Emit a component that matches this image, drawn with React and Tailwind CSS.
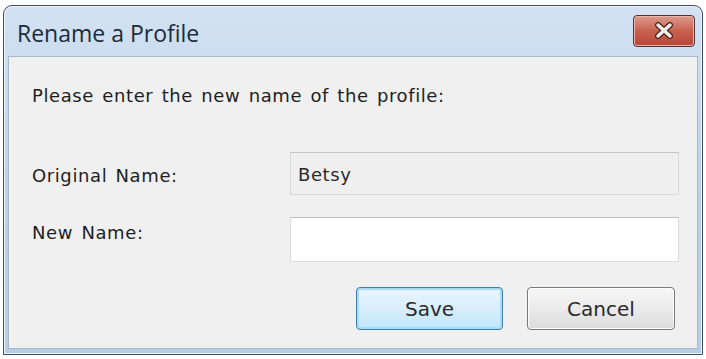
export default function App() {
  return (
    <div className="w-[706px] h-[359px] bg-white p-[3px] pt-[5px] pb-[4px]">
      <div
        className="h-full flex flex-col rounded-t-[9px] border border-[#3f4f5f] bg-gradient-to-b from-[#d3e2f2] via-[#bcd2ea] to-[#b6cde7] shadow-[inset_0_0_0_1px_#eef4fb]"
        style={{ fontFamily: '"DejaVu Sans", Tahoma, sans-serif' }}
      >
        {/* Title bar */}
        <div className="h-[50px] flex items-center justify-between pl-[13px] pr-[7px]">
          <span
            className="text-[23px] text-[#1a2c3c] pt-[5px]"
            style={{ fontFamily: '"Open Sans", "Noto Sans", sans-serif' }}
          >
            Rename a Profile
          </span>
          <div className="w-[62px] h-[32px] mb-[1px] rounded-[4px] border border-[#4e3436] bg-gradient-to-b from-[#dc9a8e] via-[#c9604f] to-[#b94634] shadow-[inset_0_0_0_1px_#eab7aa] flex items-center justify-center">
            <svg width="22" height="17" viewBox="0 0 22 17">
              <path d="M5 3 L17 14 M17 3 L5 14" stroke="#4a2520" strokeWidth="6" strokeLinecap="round" />
              <path d="M5 3 L17 14 M17 3 L5 14" stroke="#f3ede8" strokeWidth="3.5" strokeLinecap="round" />
            </svg>
          </div>
        </div>

        {/* Client area */}
        <div className="flex-1 mx-[4px] mb-[5px] bg-[#f0f0f0] border border-[#a8b8c8] flex flex-col text-[18px] text-[#1e1e1e] tracking-[0.6px] [word-spacing:2px]">
          <div className="pl-[23px] pt-[25px]">Please enter the new name of the profile:</div>

          <div className="mt-[43px] flex items-start pl-[23px] pr-[18px]">
            <span className="w-[258px] pt-[10px]">Original Name:</span>
            <div className="flex-1 h-[43px] border border-[#d8d8d8] border-t-[#c4c4c4] bg-[#efefef] pl-[7px] pt-[8px] text-[#2a2a2a]">
              Betsy
            </div>
          </div>

          <div className="mt-[22px] flex items-start pl-[23px] pr-[18px]">
            <span className="w-[258px] pt-[2px]">New Name:</span>
            <div className="flex-1 h-[45px] border border-[#dcdcdc] border-t-[#c0c0c0] bg-white" />
          </div>

          <div className="mt-[25px] flex justify-end gap-[24px] pr-[22px] text-[20px] tracking-normal">
            <button className="w-[147px] h-[43px] rounded-[4px] border border-[#3c7fb1] bg-gradient-to-b from-[#eaf6fd] via-[#d9eefb] to-[#bee6fd] shadow-[inset_0_0_0_2px_#a8dcf6] text-[#2a2a2a]">
              Save
            </button>
            <button className="w-[148px] h-[43px] rounded-[4px] border border-[#7a7a7a] bg-gradient-to-b from-[#f6f6f6] via-[#ebebeb] to-[#dcdcdc] shadow-[inset_0_0_0_1px_#fcfcfc] text-[#2a2a2a]">
              Cancel
            </button>
          </div>
        </div>
      </div>
    </div>
  )
}
